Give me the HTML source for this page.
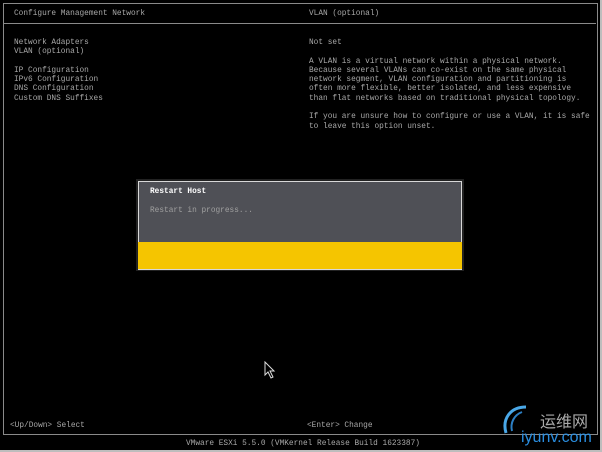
<!DOCTYPE html>
<html><head><meta charset="utf-8"><style>
html,body{margin:0;padding:0;background:#000;}
body{width:602px;height:452px;position:relative;overflow:hidden;font-family:"Liberation Mono",monospace;font-size:7.8px;color:#a8a8a8;}
.t{position:absolute;white-space:pre;line-height:9.3px;}
.frame{position:absolute;left:3px;top:3px;width:593px;height:430px;border:1px solid #8a8a8a;}
.hl{position:absolute;left:4px;width:592px;height:1px;background:#8a8a8a;}
</style></head><body>
<div style="position:absolute;right:0;top:0;width:2px;height:452px;background:#bdbdbd"></div>
<div style="position:absolute;left:0;bottom:0;width:602px;height:2px;background:#bdbdbd"></div>
<div class="frame"></div>
<div class="hl" style="top:23px"></div>
<div class="t" style="left:14px;top:10px">Configure Management Network</div>
<div class="t" style="left:309px;top:10px">VLAN (optional)</div>
<div class="t" style="left:14px;top:39px">Network Adapters
VLAN (optional)

IP Configuration
IPv6 Configuration
DNS Configuration
Custom DNS Suffixes</div>
<div class="t" style="left:309px;top:39px">Not set

A VLAN is a virtual network within a physical network.
Because several VLANs can co-exist on the same physical
network segment, VLAN configuration and partitioning is
often more flexible, better isolated, and less expensive
than flat networks based on traditional physical topology.

If you are unsure how to configure or use a VLAN, it is safe
to leave this option unset.</div>
<div style="position:absolute;left:136px;top:179px;width:328px;height:92px;background:#222"></div>
<div style="position:absolute;left:138px;top:181px;width:322px;height:87px;border:1px solid #d8d8d8;background:#4f5056"></div>
<div style="position:absolute;left:138px;top:242px;width:324px;height:27px;background:#f5c500"></div>
<div class="t" style="left:150px;top:188px;color:#fff;font-weight:bold">Restart Host</div>
<div class="t" style="left:150px;top:207px;color:#a0a0a0">Restart in progress...</div>
<div class="t" style="left:10px;top:422px">&lt;Up/Down&gt; Select</div>
<div class="t" style="left:307px;top:422px">&lt;Enter&gt; Change</div>
<div class="t" style="left:186px;top:440px">VMware ESXi 5.5.0 (VMKernel Release Build 1623387)</div>
<svg style="position:absolute;left:264px;top:361px" width="12" height="18" viewBox="0 0 12 18"><path d="M1 1 L1 14 L4 11 L7 17 L9 16 L6 10 L10 10 Z" fill="#000" stroke="#ddd" stroke-width="1"/></svg>
<svg style="position:absolute;left:498px;top:403px" width="40" height="40" viewBox="0 0 40 40"><path d="M28 4 C12 4 4 16 8 30" fill="none" stroke="#4aa8e8" stroke-width="3"/><path d="M24 9 C16 12 12 20 14 28" fill="none" stroke="#2c7fc4" stroke-width="2"/></svg>
<div style="position:absolute;left:540px;top:411px;font-family:'Noto Sans CJK SC',sans-serif;font-size:16px;color:#aaa;line-height:18px">运维网</div>
<div style="position:absolute;left:521px;top:429px;font-family:'Liberation Sans',sans-serif;font-size:16px;color:#2a8ee0;line-height:18px">iyunv.com</div>
</body></html>
